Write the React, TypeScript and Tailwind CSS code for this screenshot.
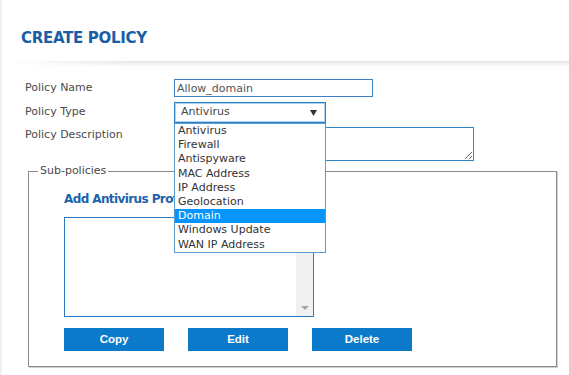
import React from "react";

const policyTypes = [
  "Antivirus",
  "Firewall",
  "Antispyware",
  "MAC Address",
  "IP Address",
  "Geolocation",
  "Domain",
  "Windows Update",
  "WAN IP Address",
];

export default function App() {
  const selected = "Domain";

  return (
    <div className="min-h-screen w-full bg-white font-['DejaVu_Sans',sans-serif] shadow-[inset_2px_0_0_#f1f1f1]">
      {/* Page header */}
      <div className="h-[61px] pl-[21px] pt-[29px]">
        <h1 className="text-[15px] font-bold leading-[18px] tracking-[-0.3px] text-[#1a5da5]">
          CREATE POLICY
        </h1>
      </div>
      <div className="h-[6px] bg-[linear-gradient(to_bottom,#e3e3e3,#ffffff)] [mask-image:linear-gradient(to_right,transparent_8px,black_140px)]" />

      {/* Policy form */}
      <div className="grid grid-cols-[149px_auto] pl-[25px] pt-[12px] text-[11px] text-[#4a4a4a]">
        <label className="flex h-[18px] items-center">Policy Name</label>
        <input
          readOnly
          value="Allow_domain"
          className="h-[18px] w-[199px] border border-[#3a83c0] bg-white pl-[2px] text-[11px] text-[#555] outline-none"
        />

        <label className="mt-[5px] flex h-[21px] items-center">Policy Type</label>
        <div className="relative z-10 mt-[5px] w-[152px]">
          <div className="flex h-[21px] items-center justify-between border border-[#2e7fc2] bg-white pl-[6px] pr-[8px] text-[#444] shadow-[inset_0_0_0_1px_#a9d2f3]">
            <span>Antivirus</span>
            <svg width="7" height="6" viewBox="0 0 7 6">
              <path d="M0 0h7L3.5 6z" fill="#333" />
            </svg>
          </div>
          {/* open option list */}
          <ul className="absolute left-0 top-full w-[152px] border border-[#5b9bd3] bg-white py-0 text-[#333]">
            {policyTypes.map((t) => (
              <li
                key={t}
                className={
                  t === selected
                    ? "h-[14.2px] bg-[#0794fd] pl-[3px] leading-[14.2px] text-white"
                    : "h-[14.2px] pl-[3px] leading-[14.2px]"
                }
              >
                {t}
              </li>
            ))}
          </ul>
        </div>

        <label className="mt-[4px] pt-[1px] leading-[13px]">Policy Description</label>
        <textarea className="mt-[4px] block h-[34px] w-[300px] border border-[#2f86c4] bg-white text-[11px] outline-none" />
      </div>

      {/* Sub-policies */}
      <fieldset className="ml-[28px] mt-[3px] w-[529px] border border-[#8a8a8a] pb-[15px] shadow-[1px_1px_0_#d0d0d0]">
        <legend className="ml-[9px] px-[2px] text-[11px] leading-[14px] text-[#4a4a4a]">Sub-policies</legend>
        <div className="pl-[35px]">
          <h2 className="mt-[13px] h-[16px] w-[110px] overflow-hidden whitespace-nowrap text-[12px] font-bold leading-[16px] tracking-[-0.6px] text-[#1b63ab]">
            Add Antivirus Profile
          </h2>
          <div className="mt-[10px] flex h-[100px] w-[250px] border border-[#2b7bbd] bg-white">
            <div className="flex-1" />
            <div className="flex w-[17px] flex-col items-center justify-end bg-[#f1f1f1] pb-[6px]">
              <svg width="8" height="4" viewBox="0 0 8 4">
                <path d="M0 0h8L4 4z" fill="#a3a3a3" />
              </svg>
            </div>
          </div>
          <div className="mt-[11px] flex gap-6 font-['Liberation_Sans',Arial,sans-serif]">
            {["Copy", "Edit", "Delete"].map((b) => (
              <button
                key={b}
                className="h-[23px] w-[100px] bg-[#0c7acb] text-[11.5px] font-bold text-white"
              >
                {b}
              </button>
            ))}
          </div>
        </div>
      </fieldset>
    </div>
  );
}
